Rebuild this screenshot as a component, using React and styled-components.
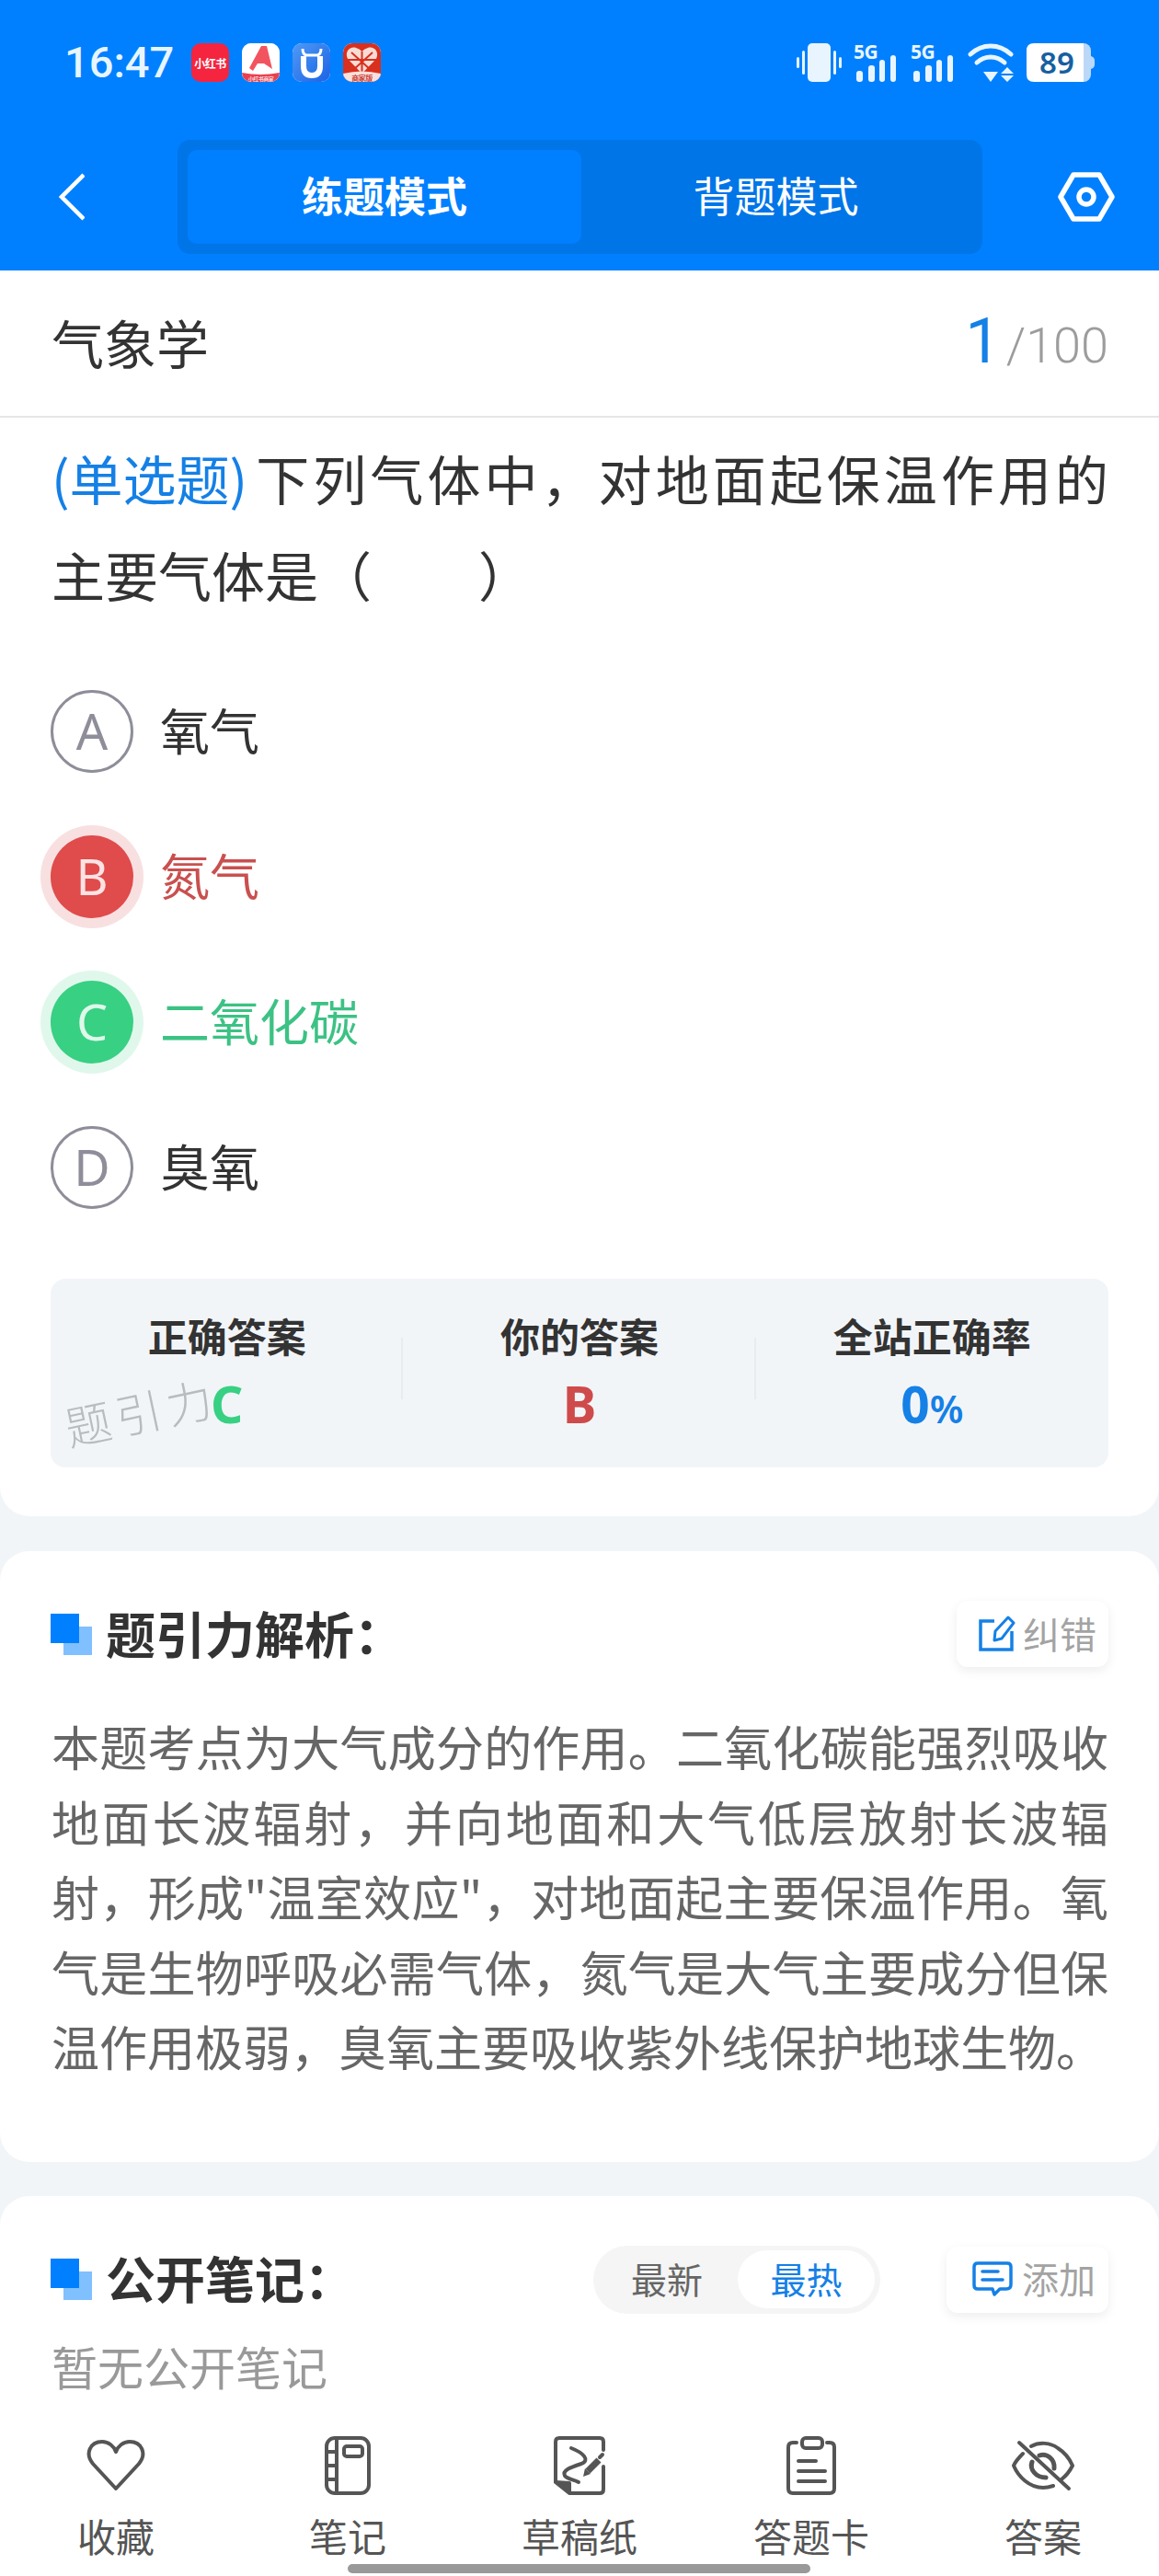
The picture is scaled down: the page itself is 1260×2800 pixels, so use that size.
import styled, { createGlobalStyle } from "styled-components";

const CJK = `"Noto Sans CJK SC", "Noto Sans", sans-serif`;

const GlobalStyle = createGlobalStyle`
  html, body {
    margin: 0;
    padding: 0;
    background: #f2f5f8;
    font-family: ${CJK};
  }
  * {
    box-sizing: border-box;
  }
`;

const Page = styled.div`
  position: relative;
  width: 1260px;
  height: 2800px;
  display: flex;
  flex-direction: column;
  overflow: hidden;
  background: #f2f5f8;
`;

/* header */
const Header = styled.header`
  height: 294px;
  padding-top: 47px;
  background: #0080fe;
  color: #fff;
`;

const StatusBar = styled.div`
  height: 42px;
  padding: 0 70px;
  display: flex;
  align-items: center;
  justify-content: space-between;
`;

const StatusLeft = styled.div`
  display: flex;
  align-items: center;
`;

const Clock = styled.span`
  width: 138px;
  font-family: Roboto, sans-serif;
  font-size: 47px;
  font-weight: 500;
  line-height: 42px;
  color: #e8f5ff;
`;

const AppIcons = styled.div`
  display: flex;
  gap: 14px;
`;

const AppIcon = styled.div`
  width: 41px;
  height: 42px;
  border-radius: 10px;
  overflow: hidden;
  display: flex;
  align-items: center;
  justify-content: center;
  background: ${(props) => props.bg || "#fff"};
  color: #fff;
  font-size: 12px;
  font-weight: 700;
  white-space: nowrap;
  letter-spacing: -0.5px;
`;

const StatusRight = styled.div`
  display: flex;
  align-items: center;
  gap: 12px;
`;

const Signal = styled.div`
  position: relative;
  width: 50px;
  height: 42px;
`;

const FiveG = styled.span`
  position: absolute;
  left: 0;
  top: 1px;
  font-family: "Noto Sans", sans-serif;
  font-size: 21px;
  font-weight: 700;
  line-height: 16px;
  letter-spacing: -0.5px;
  color: #e8f5ff;
`;

const Battery = styled.div`
  position: relative;
  width: 74px;
  height: 42px;
`;

const BatteryText = styled.span`
  position: absolute;
  left: 0;
  width: 66px;
  top: 0;
  text-align: center;
  font-family: "Noto Sans", sans-serif;
  font-size: 33px;
  font-weight: 600;
  line-height: 42px;
  color: #17609f;
`;

const NavRow = styled.div`
  margin-top: 63px;
  display: grid;
  grid-template-columns: 193px 875px 1fr;
  align-items: center;
`;

const BackCell = styled.div`
  padding-left: 64px;
  display: flex;
`;

const GearCell = styled.div`
  padding-left: 82px;
  display: flex;
`;

const ModeSwitch = styled.div`
  height: 124px;
  padding: 11px 13px 11px 11px;
  display: grid;
  grid-template-columns: 428px 1fr;
  background: #0075e8;
  border-radius: 14px;
`;

const ModeTab = styled.div`
  padding-bottom: 5px;
  display: flex;
  align-items: center;
  justify-content: center;
  border-radius: 10px;
  font-size: 45px;
  font-weight: ${(props) => (props.active ? 700 : 400)};
  background: ${(props) => (props.active ? "#0080fe" : "transparent")};
`;

/* question card */
const Card = styled.section`
  background: #fff;
  border-radius: ${(props) => props.radius || "32px"};
`;

const QuestionCard = styled(Card)`
  padding-bottom: 53px;
`;

const TitleRow = styled.div`
  height: 160px;
  padding: 0 55px 5px 56px;
  display: flex;
  align-items: center;
  justify-content: space-between;
  border-bottom: 2px solid #e6e6e6;
`;

const Subject = styled.div`
  font-size: 57px;
  color: #333;
`;

const Counter = styled.div`
  display: flex;
  align-items: baseline;
  font-family: Roboto, sans-serif;
  font-weight: 300;
  font-size: 54px;
  color: #9c9c9c;
`;

const CounterNow = styled.span`
  font-size: 68px;
  font-weight: 400;
  color: #1580e6;
  margin-right: 6px;
`;

const Question = styled.div`
  margin-top: 13px;
  padding: 0 55px 0 56px;
  font-size: 58px;
  line-height: 105px;
  color: #333;
`;

const QuestionLine = styled.div`
  text-align-last: ${(props) => (props.fill ? "justify" : "left")};
`;

const QuestionType = styled.span`
  display: inline-block;
  margin-right: 5px;
  color: #1580e6;
`;

const Options = styled.div`
  margin-top: 39px;
  padding: 0 55px;
`;

const OptionRow = styled.div`
  height: 158px;
  display: flex;
  align-items: center;
  gap: 29px;
`;

const optionColors = {
  wrong: { fill: "#e04b4b", ring: "#f8e0e1", letter: "#fbe3e3", text: "#c9504f" },
  right: { fill: "#38d083", ring: "#e0f8ec", letter: "#def8ea", text: "#3cc284" },
};

const OptionCircle = styled.div`
  width: 90px;
  height: 90px;
  padding-bottom: 2px;
  border-radius: 50%;
  display: flex;
  align-items: center;
  justify-content: center;
  font-family: "Noto Sans", sans-serif;
  font-size: 54px;
  font-weight: 400;
  color: ${(props) => (props.state ? optionColors[props.state].letter : "#8e8e9a")};
  background: ${(props) => (props.state ? optionColors[props.state].fill : "#fff")};
  border: ${(props) => (props.state ? "none" : "3px solid #8e8e9a")};
  box-shadow: ${(props) => (props.state ? `0 0 0 11px ${optionColors[props.state].ring}` : "none")};
`;

const OptionText = styled.div`
  padding-bottom: 6px;
  font-size: 54px;
  color: ${(props) => (props.state ? optionColors[props.state].text : "#333")};
`;

const AnswerPanel = styled.div`
  position: relative;
  margin: 42px 55px 0;
  height: 205px;
  padding-top: 31px;
  display: grid;
  grid-template-columns: repeat(3, 1fr);
  background: #f2f5f8;
  border-radius: 16px;
`;

const AnswerCol = styled.div`
  position: relative;
  text-align: center;

  &:nth-child(-n + 2)::after {
    content: "";
    position: absolute;
    right: 0;
    top: 33px;
    height: 67px;
    width: 2px;
    background: #e9ecef;
  }
`;

const AnswerLabel = styled.div`
  font-size: 43px;
  font-weight: 700;
  line-height: 60px;
  color: #333;
`;

const AnswerValue = styled.div`
  margin-top: 10px;
  font-family: "Noto Sans", sans-serif;
  font-size: 55px;
  font-weight: 700;
  line-height: 70px;
  color: ${(props) => props.color};
`;

const Percent = styled.span`
  font-size: 42px;
  font-weight: 600;
`;

const Watermark = styled.div`
  position: absolute;
  left: 14px;
  top: 113px;
  font-size: 50px;
  font-weight: 300;
  line-height: 60px;
  letter-spacing: 6px;
  color: #b9bcbf;
  transform: rotate(-12deg);
`;

/* analysis + notes */
const AnalysisCard = styled(Card)`
  margin-top: 38px;
  padding: 54px 55px 85px 55px;
`;

const NotesCard = styled(Card)`
  margin-top: 37px;
  flex: 1;
  padding: 54px 55px 0;
  border-radius: 32px 32px 0 0;
`;

const SectionHead = styled.div`
  display: flex;
  align-items: center;
  justify-content: space-between;
`;

const SectionTitle = styled.div`
  display: flex;
  align-items: center;
  gap: 15px;
  font-size: 54px;
  font-weight: 700;
  line-height: 60px;
  color: #333;
`;

const SectionText = styled.span`
  padding-bottom: 3px;
`;

const TitleMark = styled.div`
  position: relative;
  width: 45px;
  height: 45px;
  background: linear-gradient(#80c0ff, #80c0ff) no-repeat 14px 14px / 31px 31px;

  &::before {
    content: "";
    position: absolute;
    left: 0;
    top: 0;
    width: 31px;
    height: 32px;
    background: #0080fe;
  }
`;

const PillButton = styled.div`
  width: ${(props) => props.width}px;
  height: 72px;
  padding-left: ${(props) => props.inset}px;
  display: flex;
  align-items: center;
  gap: ${(props) => props.gap}px;
  background: #fff;
  border-radius: 12px;
  box-shadow: 0 4px 12px rgba(0, 0, 0, 0.07);
  font-size: 40px;
  color: #a3a3a3;
`;

const PillText = styled.span`
  padding-bottom: 3px;
`;

const Explanation = styled.p`
  margin: 45px 0 0 1px;
  font-size: 52px;
  line-height: 81.6px;
  color: #666;
  text-align: justify;
`;

const NotesTools = styled.div`
  display: flex;
  align-items: center;
  gap: 72px;
`;

const SortSwitch = styled.div`
  width: 312px;
  height: 74px;
  padding: 5px 6px 6px 3px;
  display: grid;
  grid-template-columns: 154px 1fr;
  background: #f5f5f5;
  border-radius: 37px;
`;

const SortTab = styled.div`
  padding-bottom: 3px;
  display: flex;
  align-items: center;
  justify-content: center;
  border-radius: 32px;
  font-size: 39px;
  color: ${(props) => (props.active ? "#1580e6" : "#666")};
  background: ${(props) => (props.active ? "#fff" : "transparent")};
`;

const EmptyNote = styled.div`
  margin: 21px 0 0 1px;
  font-size: 50px;
  line-height: 70px;
  color: #999;
`;

/* bottom tabs */
const TabBar = styled.nav`
  height: 170px;
  padding-top: 18px;
  display: grid;
  grid-template-columns: repeat(5, 252px);
  background: #fff;
`;

const TabItem = styled.div`
  display: flex;
  flex-direction: column;
  align-items: center;
`;

const TabIcon = styled.div`
  height: 64px;
  display: flex;
  align-items: center;
`;

const TabLabel = styled.div`
  margin-top: 19px;
  font-size: 42px;
  line-height: 50px;
  color: #555;
`;

const HomeBar = styled.div`
  position: absolute;
  left: 378px;
  bottom: 3px;
  width: 503px;
  height: 10px;
  border-radius: 5px;
  background: #999;
`;

const BackIcon = () => (
  <svg width="28" height="52" viewBox="0 0 28 52" fill="none" stroke="#fff" strokeWidth="4.5">
    <path d="M27 2 L3 26 L27 50" />
  </svg>
);

const GearIcon = () => (
  <svg width="62" height="54" viewBox="0 0 62 54" fill="none" stroke="#fff" strokeWidth="5.5" strokeLinejoin="round">
    <path d="M17 3 H45 L59 27 L45 51 H17 L3 27 Z" />
    <circle cx="31" cy="27" r="8" />
  </svg>
);

const VibrateIcon = () => (
  <svg width="50" height="42" viewBox="0 0 50 42" fill="#e8f5ff">
    <rect x="12" y="0" width="25" height="42" rx="5" />
    <rect x="0" y="15" width="3" height="12" rx="1.5" />
    <rect x="6" y="8" width="3" height="26" rx="1.5" />
    <rect x="40" y="8" width="3" height="26" rx="1.5" />
    <rect x="46" y="15" width="3" height="12" rx="1.5" />
  </svg>
);

const SignalBars = () => (
  <svg width="50" height="42" viewBox="0 0 50 42" fill="#e8f5ff">
    <rect x="3" y="30" width="7" height="12" rx="3" />
    <rect x="16" y="24" width="7" height="18" rx="3" />
    <rect x="28" y="18" width="6" height="24" rx="3" />
    <rect x="40" y="13" width="6" height="29" rx="3" />
  </svg>
);

const WifiIcon = () => (
  <svg width="52" height="42" viewBox="0 0 52 42" fill="none" stroke="#e8f5ff" strokeWidth="5" strokeLinecap="round">
    <path d="M3 12 C16 0 34 0 47 12" />
    <path d="M10 21 C19 13 31 13 40 21" />
    <path fill="#e8f5ff" stroke="none" d="M17 31 H33 L25 42 Z" />
    <path fill="#e8f5ff" stroke="none" d="M43 26 L50 33 H36 Z M36 35 H50 L43 42 Z" />
  </svg>
);

const BatteryShape = () => (
  <svg width="74" height="42" viewBox="0 0 74 42">
    <rect x="50" y="0" width="20" height="42" rx="8" fill="#bcd8f8" />
    <path d="M8 0 H62 V42 H8 Q0 42 0 34 V8 Q0 0 8 0 Z" fill="#fff" />
    <path d="M70 14 Q74 15 74 19 V23 Q74 27 70 28 Z" fill="#bcd8f8" />
  </svg>
);

const AIcon = () => (
  <svg width="41" height="42" viewBox="0 0 41 42">
    <rect width="41" height="42" fill="#fff" />
    <path d="M8 27 L21 3 H27 L33 28 L24 22 L17 22 L12 30 Z" fill="#f2545f" />
    <path d="M0 32 Q20 36 41 32 V42 H0 Z" fill="#e8404e" />
    <text x="20.5" y="40.5" textAnchor="middle" fontSize="6" fill="#fbd9dc">小红书商家</text>
  </svg>
);

const CowIcon = () => (
  <svg width="41" height="42" viewBox="0 0 41 42" fill="none">
    <defs>
      <linearGradient id="cowBg" x1="0" y1="0" x2="1" y2="1">
        <stop offset="0" stopColor="#4f9af5" />
        <stop offset="1" stopColor="#1b63e6" />
      </linearGradient>
    </defs>
    <rect width="41" height="42" fill="url(#cowBg)" />
    <path d="M11 6 Q11 12 15 13 H27 Q31 12 31 6" stroke="#fff" strokeWidth="3" />
    <path d="M12 14 V25 Q12 35 21 35 Q30 35 30 25 V14" stroke="#fff" strokeWidth="6" />
  </svg>
);

const PddIcon = () => (
  <svg width="41" height="42" viewBox="0 0 41 42" fill="none">
    <rect width="41" height="42" fill="#d8301f" />
    <path d="M20.5 33 L5 17 C1 9 8 3 14 5 Q18 6 20.5 9 Q23 6 27 5 C33 3 40 9 36 17 Z" fill="#f7dcd5" />
    <path d="M9 10 L30 29 M32 10 L11 29 M20.5 9 V32 M4 18 H37" stroke="#d8301f" strokeWidth="2" />
    <path d="M0 33 Q20 28 41 33 V42 H0 Z" fill="#f9e0dc" />
    <text x="20.5" y="40.5" textAnchor="middle" fontSize="8" fill="#c9453a">商家版</text>
  </svg>
);

const EditIcon = () => (
  <svg width="40" height="40" viewBox="0 0 40 40" fill="none" stroke="#1580e6" strokeWidth="3.5">
    <path d="M17 6 H2 V37 H36 V17" />
    <path d="M17 27 L18 17 L32 2 L38 8 L25 25 Z" strokeWidth="3" strokeLinejoin="round" />
  </svg>
);

const ChatIcon = () => (
  <svg width="44" height="40" viewBox="0 0 44 40" fill="none" stroke="#1580e6" strokeWidth="3.5" strokeLinecap="round">
    <path d="M6 2 H38 Q42 2 42 6 V25 Q42 30 37 30 H30 L24 36 L22 30 H6 Q2 30 2 26 V6 Q2 2 6 2 Z" strokeLinejoin="round" />
    <path d="M11 11 H28 M11 20 H33" />
  </svg>
);

const stroke = { fill: "none", stroke: "#555", strokeWidth: 4 };

const HeartIcon = () => (
  <svg width="64" height="56" viewBox="0 0 64 56" {...stroke} strokeLinejoin="round">
    <path d="M32 53 L7 26 C-2 15 4 2 17 2 C24 2 30 7 32 13 C34 7 40 2 47 2 C60 2 66 15 57 26 Z" />
  </svg>
);

const NotebookIcon = () => (
  <svg width="50" height="64" viewBox="0 0 50 64" {...stroke}>
    <rect x="2" y="2" width="46" height="60" rx="9" />
    <path d="M13 2 V62 M2 17 H13 M2 32 H13 M2 47 H13" />
    <rect x="21" y="11" width="20" height="11" rx="3" />
  </svg>
);

const DraftIcon = () => (
  <svg width="56" height="64" viewBox="0 0 56 64" {...stroke} strokeLinecap="round">
    <path d="M2 49 V6 Q2 2 6 2 H50 Q54 2 54 6 V15 M54 33 V58 Q54 62 50 62 H18" />
    <path d="M2 50 L17 51 V62 Z" fill="#555" strokeLinejoin="round" />
    <path d="M19 13 C32 18 40 26 30 30 C18 34 9 37 12 43 C15 47 22 47 27 50" />
    <path d="M37 38 L49 26" strokeWidth="7" strokeLinecap="butt" />
    <path d="M32 44 L34 35 L40 41 Z" fill="#555" stroke="none" />
    <path d="M50 23 L53 20" strokeWidth="4" />
  </svg>
);

const ClipboardIcon = () => (
  <svg width="54" height="64" viewBox="0 0 54 64" {...stroke} strokeLinecap="round">
    <path d="M11 7 H7 Q2 7 2 12 V57 Q2 62 7 62 H47 Q52 62 52 57 V12 Q52 7 47 7 H44" />
    <rect x="17" y="2" width="22" height="11" rx="4" />
    <path d="M13 27 H32 M13 38 H42 M13 49 H42" />
  </svg>
);

const EyeOffIcon = () => (
  <svg width="68" height="56" viewBox="0 0 68 56" {...stroke} strokeLinecap="round">
    <path d="M8 3 L62 53" />
    <path d="M21 7 C30 2 42 3 50 9 C58 14 63 21 66 28 C63 34 59 39 54 43" />
    <path d="M12 15 C8 19 4 23 2 28 C7 40 19 52 34 52 C38 52 42 51 45 50" />
    <path d="M22 24 C19 32 26 41 37 41" strokeWidth="5" />
    <path d="M30 17 C38 14 47 21 46 31" strokeWidth="5" />
  </svg>
);

const tabs = [
  { label: "收藏", icon: <HeartIcon /> },
  { label: "笔记", icon: <NotebookIcon /> },
  { label: "草稿纸", icon: <DraftIcon /> },
  { label: "答题卡", icon: <ClipboardIcon /> },
  { label: "答案", icon: <EyeOffIcon /> },
];

const options = [
  { key: "A", text: "氧气" },
  { key: "B", text: "氮气", state: "wrong" },
  { key: "C", text: "二氧化碳", state: "right" },
  { key: "D", text: "臭氧" },
];

const App = () => {
  return (
    <Page>
      <GlobalStyle />
      <Header>
        <StatusBar>
          <StatusLeft>
            <Clock>16:47</Clock>
            <AppIcons>
              <AppIcon bg="#f5243f">小红书</AppIcon>
              <AppIcon><AIcon /></AppIcon>
              <AppIcon><CowIcon /></AppIcon>
              <AppIcon><PddIcon /></AppIcon>
            </AppIcons>
          </StatusLeft>
          <StatusRight>
            <VibrateIcon />
            <Signal><SignalBars /><FiveG>5G</FiveG></Signal>
            <Signal><SignalBars /><FiveG>5G</FiveG></Signal>
            <WifiIcon />
            <Battery>
              <BatteryShape />
              <BatteryText>89</BatteryText>
            </Battery>
          </StatusRight>
        </StatusBar>
        <NavRow>
          <BackCell><BackIcon /></BackCell>
          <ModeSwitch>
            <ModeTab active>练题模式</ModeTab>
            <ModeTab>背题模式</ModeTab>
          </ModeSwitch>
          <GearCell><GearIcon /></GearCell>
        </NavRow>
      </Header>

      <QuestionCard radius="0 0 32px 32px">
        <TitleRow>
          <Subject>气象学</Subject>
          <Counter>
            <CounterNow>1</CounterNow>/100
          </Counter>
        </TitleRow>
        <Question>
          <QuestionLine fill="true">
            <QuestionType>(单选题)</QuestionType>下列气体中，对地面起保温作用的
          </QuestionLine>
          <QuestionLine>主要气体是（　　）</QuestionLine>
        </Question>
        <Options>
          {options.map((option) => (
            <OptionRow key={option.key}>
              <OptionCircle state={option.state}>{option.key}</OptionCircle>
              <OptionText state={option.state}>{option.text}</OptionText>
            </OptionRow>
          ))}
        </Options>
        <AnswerPanel>
          <AnswerCol>
            <AnswerLabel>正确答案</AnswerLabel>
            <AnswerValue color="#38d083">C</AnswerValue>
          </AnswerCol>
          <AnswerCol>
            <AnswerLabel>你的答案</AnswerLabel>
            <AnswerValue color="#cf4a4a">B</AnswerValue>
          </AnswerCol>
          <AnswerCol>
            <AnswerLabel>全站正确率</AnswerLabel>
            <AnswerValue color="#1580e6">0<Percent>%</Percent></AnswerValue>
          </AnswerCol>
          <Watermark>题引力</Watermark>
        </AnswerPanel>
      </QuestionCard>

      <AnalysisCard>
        <SectionHead>
          <SectionTitle><TitleMark /><SectionText>题引力解析：</SectionText></SectionTitle>
          <PillButton width={165} inset={24} gap={8}><EditIcon /><PillText>纠错</PillText></PillButton>
        </SectionHead>
        <Explanation>
          本题考点为大气成分的作用。二氧化碳能强烈吸收地面长波辐射，并向地面和大气低层放射长波辐射，形成"温室效应"，对地面起主要保温作用。氧气是生物呼吸必需气体，氮气是大气主要成分但保温作用极弱，臭氧主要吸收紫外线保护地球生物。
        </Explanation>
      </AnalysisCard>

      <NotesCard>
        <SectionHead>
          <SectionTitle><TitleMark /><SectionText>公开笔记：</SectionText></SectionTitle>
          <NotesTools>
            <SortSwitch>
              <SortTab>最新</SortTab>
              <SortTab active>最热</SortTab>
            </SortSwitch>
            <PillButton width={176} inset={28} gap={10}><ChatIcon /><PillText>添加</PillText></PillButton>
          </NotesTools>
        </SectionHead>
        <EmptyNote>暂无公开笔记</EmptyNote>
      </NotesCard>

      <TabBar>
        {tabs.map((tab) => (
          <TabItem key={tab.label}>
            <TabIcon>{tab.icon}</TabIcon>
            <TabLabel>{tab.label}</TabLabel>
          </TabItem>
        ))}
      </TabBar>
      <HomeBar />
    </Page>
  );
};

export default App;
